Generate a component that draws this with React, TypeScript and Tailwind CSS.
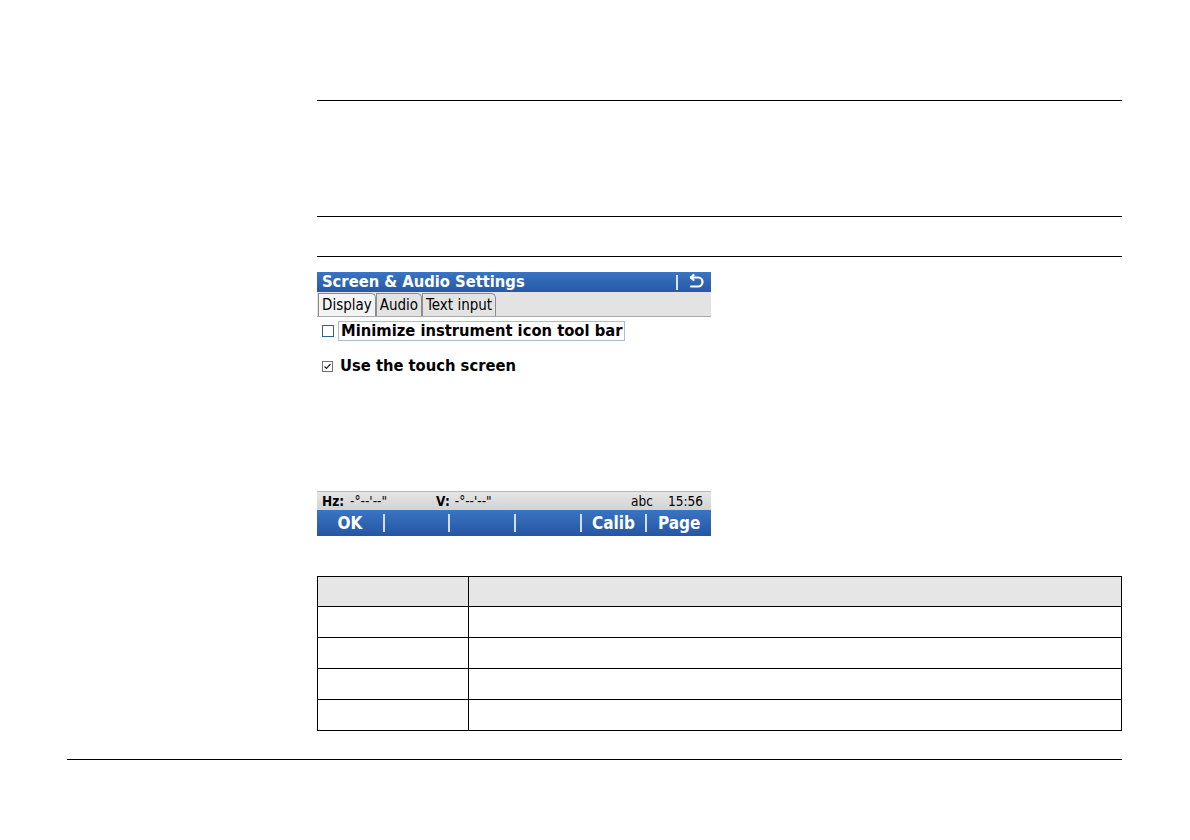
import React from "react";

const ui = { fontFamily: '"DejaVu Sans Condensed", "DejaVu Sans", sans-serif' };

const BackIcon = () => (
	<svg width="18" height="16" viewBox="0 0 18 16" fill="none" stroke="white" strokeWidth="2.2" strokeLinecap="round">
		<path d="M4 3.5 H11 A4.5 4.5 0 0 1 11 12.5 H4" />
		<path d="M4 3.5 L6.5 1" />
		<path d="M4 3.5 L6.5 6" />
	</svg>
);

const Tabs = () => {
	const tabs = ["Display", "Audio", "Text input"];
	return (
		<div className="flex h-[25px] items-end border-b border-[#a8a8a8] bg-[#e3e3e3] pl-px">
			{tabs.map((t, i) => (
				<div
					key={t}
					className={`h-[23px] border border-b-0 border-[#8c8c8c] rounded-tr-[5px] px-[3px] text-[15px] leading-[22px] text-black ${
						i === 0 ? "bg-[#f4f4f4]" : "bg-[#e3e3e3]"
					}`}
				>
					{t}
				</div>
			))}
		</div>
	);
};

const Screen = () => {
	const keys = ["OK", "", "", "", "Calib", "Page"];
	return (
		<div className="flex h-[264px] w-[394px] flex-col bg-white" style={ui}>
			<div className="flex h-[20px] items-center bg-gradient-to-b from-[#3a74c2] to-[#2659a6] pl-[5px] pr-[6px]">
				<span className="flex-1 text-[16.4px] font-bold leading-none text-white">
					Screen &amp; Audio Settings
				</span>
				<div className="mr-[9px] h-[15px] w-[2px] bg-[#d6e4f6]" />
				<BackIcon />
			</div>
			<Tabs />
			<div className="flex flex-1 flex-col px-[5px] pt-[4px]">
				<div className="flex h-[20px] items-center gap-[4px]">
					<div className="h-[12px] w-[12px] border-[1.5px] border-[#2d5f9e] bg-white" />
					<div className="border border-[#a9bcd4] px-[2px] text-[16.4px] font-bold leading-[18px] text-black">
						Minimize instrument icon tool bar
					</div>
				</div>
				<div className="mt-[15px] flex h-[20px] items-center gap-[7px]">
					<div className="flex h-[11px] w-[11px] items-center justify-center border border-[#707070] bg-white">
						<svg width="9" height="9" viewBox="0 0 9 9" fill="none" stroke="#222" strokeWidth="1.2">
							<path d="M1.5 4.5 L3.5 6.5 L7.5 2" />
						</svg>
					</div>
					<span className="text-[16.4px] font-bold leading-[18px] text-black">Use the touch screen</span>
				</div>
			</div>
			<div className="flex h-[19px] items-center border-t border-[#b8b8b8] bg-gradient-to-b from-[#e6e6e6] to-[#d2d2d2] px-[5px] text-[13.5px] text-black">
				<span className="font-bold">Hz:</span>
				<span className="ml-[6px] w-[86px]">-°--'--"</span>
				<span className="font-bold">V:</span>
				<span className="ml-[5px] flex-1">-°--'--"</span>
				<span className="w-[37px]">abc</span>
				<span className="mr-[3px]">15:56</span>
			</div>
			<div className="flex h-[26px] bg-gradient-to-b from-[#3a74c2] to-[#2556a3]">
				{keys.map((k, i) => (
					<div key={i} className="flex flex-1 items-center justify-center py-[4px]">
						{i > 0 && <div className="h-full w-[2px] bg-[#cfe0f5]" />}
						<span className="flex-1 text-center text-[17px] font-bold leading-none text-white">{k}</span>
					</div>
				))}
			</div>
		</div>
	);
};

export default function App() {
	const rows = [0, 1, 2, 3];
	return (
		<div className="h-[840px] w-[1190px] bg-white">
			<div className="ml-[317px] w-[805px] pt-[100px]">
				<div className="h-px bg-black" />
				<div className="mt-[115px] h-px bg-black" />
				<div className="mt-[39px] h-px bg-black" />
				<div className="mt-[15px]">
					<Screen />
				</div>
				<table className="mt-[40px] w-full border-collapse">
					<tbody>
						<tr className="h-[30px] bg-[#e6e6e6]">
							<td className="w-[151px] border border-black" />
							<td className="border border-black" />
						</tr>
						{rows.map((r) => (
							<tr key={r} className="h-[31px]">
								<td className="border border-black" />
								<td className="border border-black" />
							</tr>
						))}
					</tbody>
				</table>
			</div>
			<div className="ml-[67px] mt-[28px] h-px w-[1055px] bg-black" />
		</div>
	);
}
